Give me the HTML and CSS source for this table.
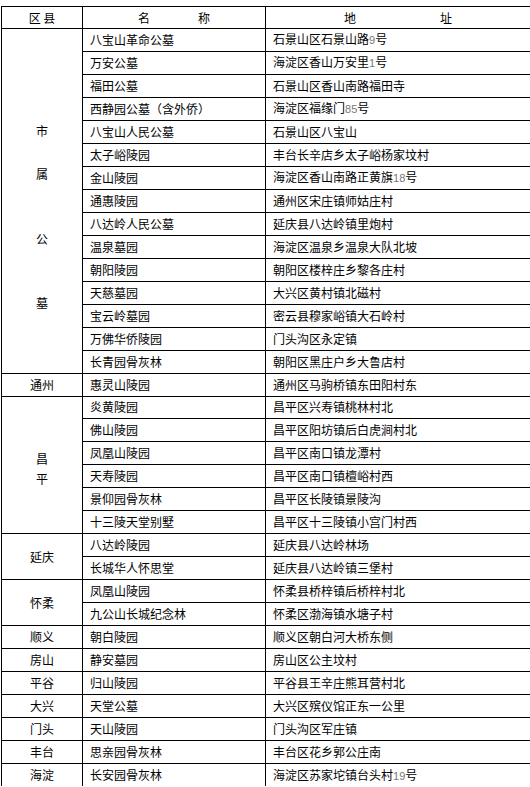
FILE: index.html
```html
<!DOCTYPE html>
<html lang="zh-CN">
<head>
<meta charset="utf-8">
<title>北京公墓一览</title>
<link rel="stylesheet" href="styles.css">
</head>
<body>
<table class="tbl">
  <colgroup><col class="c1"><col class="c2"><col class="c3"></colgroup>
  <thead>
    <tr class="head"><th>区 县</th><th>名　　　　称</th><th>地　　　　　　　址</th></tr>
  </thead>
  <tbody>
    <tr><td class="dist tall" rowspan="15"><div class="v1">市</div><div class="v2">属</div><div class="v3">公</div><div class="v4">墓</div></td><td>八宝山革命公墓</td><td>石景山区石景山路<span class="n">9</span>号</td></tr>
    <tr><td>万安公墓</td><td>海淀区香山万安里<span class="n">1</span>号</td></tr>
    <tr><td>福田公墓</td><td>石景山区香山南路福田寺</td></tr>
    <tr><td>西静园公墓（含外侨）</td><td>海淀区福缘门<span class="n">85</span>号</td></tr>
    <tr><td>八宝山人民公墓</td><td>石景山区八宝山</td></tr>
    <tr><td>太子峪陵园</td><td>丰台长辛店乡太子峪杨家坟村</td></tr>
    <tr><td>金山陵园</td><td>海淀区香山南路正黄旗<span class="n">18</span>号</td></tr>
    <tr><td>通惠陵园</td><td>通州区宋庄镇师姑庄村</td></tr>
    <tr><td>八达岭人民公墓</td><td>延庆县八达岭镇里炮村</td></tr>
    <tr><td>温泉墓园</td><td>海淀区温泉乡温泉大队北坡</td></tr>
    <tr><td>朝阳陵园</td><td>朝阳区楼梓庄乡黎各庄村</td></tr>
    <tr><td>天慈墓园</td><td>大兴区黄村镇北磁村</td></tr>
    <tr><td>宝云岭墓园</td><td>密云县穆家峪镇大石岭村</td></tr>
    <tr><td>万佛华侨陵园</td><td>门头沟区永定镇</td></tr>
    <tr><td>长青园骨灰林</td><td>朝阳区黑庄户乡大鲁店村</td></tr>
    <tr><td class="dist">通州</td><td>惠灵山陵园</td><td>通州区马驹桥镇东田阳村东</td></tr>
    <tr><td class="dist cp" rowspan="6">昌<br>平</td><td>炎黄陵园</td><td>昌平区兴寿镇桃林村北</td></tr>
    <tr><td>佛山陵园</td><td>昌平区阳坊镇后白虎涧村北</td></tr>
    <tr><td>凤凰山陵园</td><td>昌平区南口镇龙潭村</td></tr>
    <tr><td>天寿陵园</td><td>昌平区南口镇檀峪村西</td></tr>
    <tr><td>景仰园骨灰林</td><td>昌平区长陵镇景陵沟</td></tr>
    <tr><td>十三陵天堂别墅</td><td>昌平区十三陵镇小宫门村西</td></tr>
    <tr><td class="dist" rowspan="2">延庆</td><td>八达岭陵园</td><td>延庆县八达岭林场</td></tr>
    <tr><td>长城华人怀思堂</td><td>延庆县八达岭镇三堡村</td></tr>
    <tr><td class="dist" rowspan="2">怀柔</td><td>凤凰山陵园</td><td>怀柔县桥梓镇后桥梓村北</td></tr>
    <tr><td>九公山长城纪念林</td><td>怀柔区渤海镇水塘子村</td></tr>
    <tr><td class="dist">顺义</td><td>朝白陵园</td><td>顺义区朝白河大桥东侧</td></tr>
    <tr><td class="dist">房山</td><td>静安墓园</td><td>房山区公主坟村</td></tr>
    <tr><td class="dist">平谷</td><td>归山陵园</td><td>平谷县王辛庄熊耳营村北</td></tr>
    <tr><td class="dist">大兴</td><td>天堂公墓</td><td>大兴区殡仪馆正东一公里</td></tr>
    <tr><td class="dist">门头</td><td>天山陵园</td><td>门头沟区军庄镇</td></tr>
    <tr><td class="dist">丰台</td><td>思亲园骨灰林</td><td>丰台区花乡郭公庄南</td></tr>
    <tr class="last"><td class="dist">海淀</td><td>长安园骨灰林</td><td>海淀区苏家坨镇台头村<span class="n">19</span>号</td></tr>
  </tbody>
</table>
</body>
</html>
```

FILE: styles.css
```css
html, body {
  margin: 0;
  padding: 0;
  background: #ffffff;
}
body {
  font-family: "Noto Sans CJK SC", "Noto Sans", sans-serif;
  font-size: 12px;
  color: #000000;
}
.tbl {
  margin: 6px 0 0 1px;
  width: 529px;
  table-layout: fixed;
  border-collapse: collapse;
}
.c1 { width: 81px; }
.c2 { width: 183px; }
.c3 { width: 265px; }
.tbl th,
.tbl td {
  border: 1px solid #000000;
  padding: 0 0 0 7px;
  line-height: 14px;
  text-align: left;
  vertical-align: middle;
  white-space: nowrap;
  font-weight: normal;
}
.tbl tr { height: 22.97px; }
.tbl tr.head { height: 22px; }
.tbl th { text-align: center; padding: 0; }
.tbl td.dist {
  text-align: center;
  padding: 0;
}
.tbl td.tall {
  vertical-align: top;
}
.v1 { margin-top: 94px; line-height: 16px; }
.v2 { margin-top: 27px; line-height: 16px; }
.v3 { margin-top: 49px; line-height: 16px; }
.v4 { margin-top: 48px; line-height: 16px; }
.tbl td.cp {
  line-height: 20px;
  padding-top: 9px;
}
.n {
  font-family: "Liberation Sans", sans-serif;
  font-size: 11px;
  color: #777777;
}
.tbl tr.last td { border-bottom: none; }
```
